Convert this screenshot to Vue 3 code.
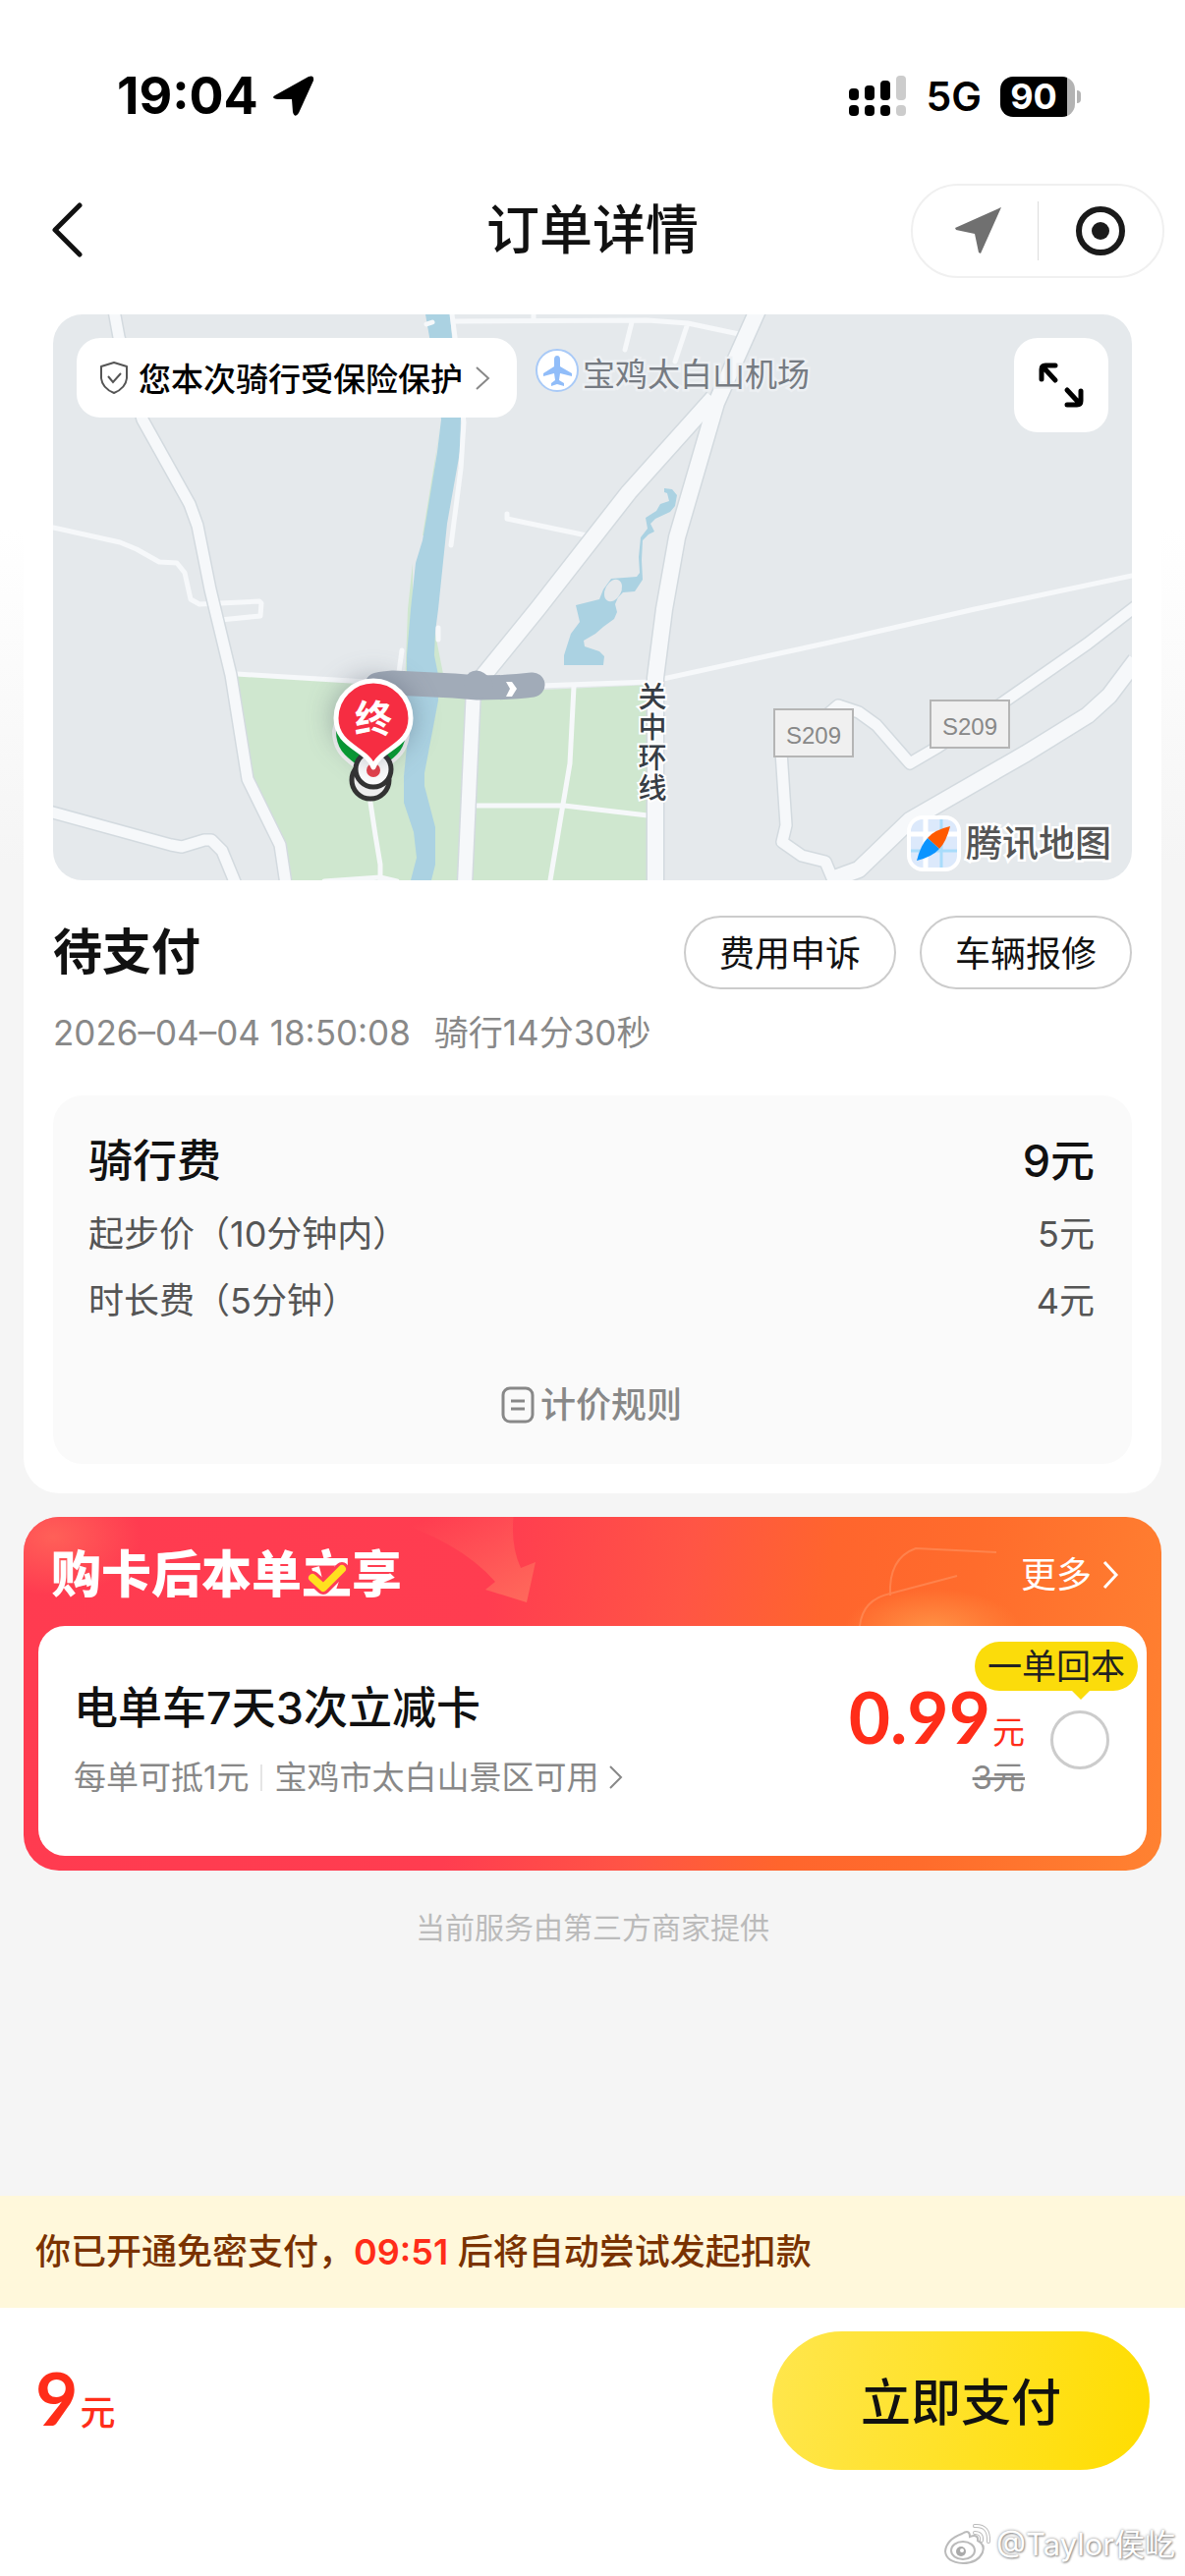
<template>
  <div class="page">
    <header class="top">
      <div class="status-bar">
        <div class="status-left">
          <span class="time">19:04</span>
          <svg width="44" height="44" viewBox="0 0 44 44">
            <path d="M3 21 L37 2 Q43 0 42 6 L27 39 Q23 45 21 38 L20 25 L6 25 Q-2 24 3 21Z" fill="#000" />
          </svg>
        </div>
        <div class="status-right">
          <svg width="60" height="42" viewBox="0 0 60 42">
            <g fill="#000">
              <rect x="0" y="13" width="10" height="12" rx="4" />
              <rect x="16" y="10" width="10" height="15" rx="4" />
              <rect x="32" y="5" width="10" height="20" rx="4" />
              <rect x="0" y="30" width="10" height="11" rx="4" />
              <rect x="16" y="30" width="10" height="11" rx="4" />
              <rect x="32" y="30" width="10" height="11" rx="4" />
            </g>
            <g fill="#ccc">
              <rect x="48" y="0" width="10" height="25" rx="4" />
              <rect x="48" y="30" width="10" height="11" rx="4" />
            </g>
          </svg>
          <span class="network">5G</span>
          <div class="battery"><span class="battery-num">90</span></div>
        </div>
      </div>

      <nav class="nav">
        <button class="back" aria-label="返回">
          <svg width="36" height="60" viewBox="0 0 36 60">
            <path d="M32 4 L7 29 L32 54" fill="none" stroke="#111" stroke-width="5" stroke-linecap="round" stroke-linejoin="round" />
          </svg>
        </button>
        <h1 class="nav-title">订单详情</h1>
        <div class="capsule">
          <button class="capsule-btn" aria-label="位置">
            <svg width="56" height="48" viewBox="-8 0 56 48">
              <path d="M47 0 L0 21 L1 23 L20 27 L24 46 L26 47Z" fill="#707070" />
            </svg>
          </button>
          <span class="capsule-line"></span>
          <button class="capsule-btn" aria-label="关闭">
            <svg width="52" height="52" viewBox="0 0 52 52">
              <circle cx="26" cy="26" r="22" fill="none" stroke="#1a1a1a" stroke-width="6" />
              <circle cx="26" cy="26" r="9" fill="#1a1a1a" />
            </svg>
          </button>
        </div>
      </nav>
    </header>

    <main class="content">
      <section class="order-card">
        <div class="map">
          <svg class="map-canvas" viewBox="0 0 1098 576" preserveAspectRatio="xMidYMid slice">
            <rect width="1098" height="576" fill="#e5e9ec" />
            <!-- 绿地 -->
            <path d="M181 367 L319 376 L500 382 L610 377 L613 576 L240 576 L231 540 L198 473Z" fill="#cfe7cf" />
            <path d="M366 253 L361 300 L358 380 L364 380 L366 300Z M388 320 L397 366 L392 380 L386 380Z M394 110 L390 140 L376 225 L380 225Z" fill="#cfe7cf" />
            <!-- 水域 -->
            <path d="M379 0 L383 23 L395 107 L391 140 L380 207 L376 230 L369 253 L364 300 L360 347 L360 440 L357 470 L357 497 L367 527 L370 553 L364 576 L385 576 L389 560 L389 522 L378 480 L378 467 L392 393 L392 367 L388 347 L389 323 L392 300 L401 213 L414 140 L415 105 L406 23 L404 0Z" fill="#abd2e2" />
            <path d="M622 177 L630 178 L635 184 L633 195 L628 201 L613 208 L608 213 L612 221 L606 224 L600 230 L599 250 L600 270 L592 282 L580 283 L575 288 L572 295 L574 303 L571 310 L560 318 L552 325 L540 332 L541 338 L556 343 L561 348 L560 357 L520 357 L520 347 L527 325 L536 313 L532 296 L556 290 L560 280 L568 269 L594 267 L597 263 L596 247 L598 227 L605 218 L603 207 L614 200 L618 193 L627 190 L625 182 L622 181Z" fill="#abd2e2" />
            <ellipse cx="570" cy="281" rx="8" ry="12" transform="rotate(28 570 281)" fill="#e5e9ec" />
            <!-- 小路 -->
            <g class="road-small">
              <path d="M0 217 L68 232 L85 239 L108 252 L126 253 L134 263 L140 290 L149 295 L210 292 L212 294 L211 307 L170 311" />
              <path d="M406 0 L409 23 L418 110 L415 157 L405 235" />
              <path d="M409 7 L605 6 L646 9 L698 20 M489 0 L489 6 M589 8 L582 36 M645 12 L633 48" />
              <path d="M462 203 L462 208 L543 225" />
              <path d="M355 342 L352 364 M392 319 L392 331 M380 10 L386 8" />
              <path d="M530 379 L526 457 L506 576 M428 500 L520 500 L605 510" />
              <path d="M323 497 L328 530 L333 560 L333 576 M276 577 L333 573 L350 577" />
              <path d="M187 366 L319 374 M495 378 L607 374 L790 334 L938 300 L1098 266" />
            </g>
            <!-- 主路：先描边再填充 -->
            <g v-for="layer in ['edge', 'fill']" :key="layer" :class="'road-' + layer">
              <g v-for="road in roads" :key="road.d">
                <path :d="road.d" :stroke-width="layer === 'edge' ? road.w + 3 : road.w" />
              </g>
            </g>
            <g v-for="sign in signs" :key="sign.x">
              <rect :x="sign.x" :y="sign.y" width="80" height="48" fill="#f0f0f0" stroke="#b5b5b5" stroke-width="2" />
              <text :x="sign.x + 40" :y="sign.y + 35" class="sign-text">S209</text>
            </g>
            <text v-for="(char, i) in '关中环线'" :key="char" x="610" :y="400 + i * 31" class="road-name">{{ char }}</text>

            <!-- 机场 -->
            <circle cx="513" cy="57" r="21" fill="#fff" stroke="#a9caf7" stroke-width="2" />
            <path d="M513 42 Q516 42 516 46 L516 53 L528 60 L528 63 L516 60 L515 67 L520 70 L520 73 L513 71 L507 73 L507 70 L511 67 L510 60 L499 63 L499 60 L510 53 L510 46 Q510 42 513 42Z" fill="#91bdf9" />
            <text x="539" y="73" class="place-name">宝鸡太白山机场</text>

            <!-- 骑行轨迹 -->
            <path d="M330 377 Q336 376 346 375 L408 378 L432 380 Q466 380 488 377" class="track" />
            <path d="M431 375 L435 378" class="track" />
            <path d="M461 374 L467 374 L472 381 L467 389 L461 389 L465 381Z" fill="#fff" />

            <!-- 起终点 -->
            <circle cx="323" cy="474" r="19" fill="#eee" stroke="#333" stroke-width="5" />
            <path d="M323 478 C319 458 286 458 286 424 A38 38 0 0 1 361 424 C361 458 327 458 323 478Z" fill="#00a32e" stroke="#f5f5f5" stroke-width="4" />
            <circle cx="326" cy="463" r="18" fill="#fff" stroke="#333" stroke-width="5" />
            <circle cx="326" cy="464" r="7" fill="#e8404a" />
            <path class="pin" d="M326 461 C320 442 288 440 288 411 A38 38 0 0 1 364 411 C364 440 332 442 326 461Z" fill="#f62d42" stroke="#fff" stroke-width="5" />
            <text x="326" y="425" class="pin-text">终</text>

            <!-- 地图标识 -->
            <rect x="871" y="512" width="51" height="53" rx="14" fill="#dce9fb" stroke="#fff" stroke-width="4" />
            <path d="M888 514 V563 M873 529 H920" stroke="#fff" stroke-width="5" />
            <path d="M904 514 V563 M873 546 H920" stroke="#a8dcfb" stroke-width="3" />
            <path d="M913 521 Q896 525 890 533 L902 544 Q909 537 913 521Z" fill="#ff5a00" />
            <path d="M879 556 Q895 552 902 544 L890 533 Q883 540 879 556Z" fill="#0a94ff" />
            <text x="929" y="552" class="brand">腾讯地图</text>
          </svg>

          <div class="map-tools">
            <button class="insurance">
              <svg width="32" height="36" viewBox="0 0 32 36">
                <path d="M16 2 L29 6 V18 Q28 28 16 33 Q4 28 3 18 V6Z" fill="none" stroke="#555" stroke-width="2" stroke-linejoin="round" />
                <path d="M10 16 L15 22 L23 13" fill="none" stroke="#555" stroke-width="2" />
              </svg>
              <span>您本次骑行受保险保护</span>
              <svg class="chevron" width="16" height="26" viewBox="0 0 16 26">
                <path d="M2 2 L14 13 L2 24" fill="none" stroke="#888" stroke-width="2" />
              </svg>
            </button>
            <button class="expand" aria-label="展开地图">
              <svg width="48" height="48" viewBox="0 0 48 48" fill="none" stroke="#000" stroke-width="5" stroke-linecap="round" stroke-linejoin="round">
                <path d="M18 19 L5 5 M4 18 V8 Q4 4 8 4 L18 4" />
                <path d="M30 29 L43 43 M44 30 V40 Q44 44 40 44 L30 44" />
              </svg>
            </button>
          </div>
        </div>

        <div class="state-row">
          <h2 class="state">待支付</h2>
          <div class="state-actions">
            <button class="pill-btn">费用申诉</button>
            <button class="pill-btn">车辆报修</button>
          </div>
        </div>
        <p class="ride-info"><span>2026–04–04 18:50:08</span><span>骑行14分30秒</span></p>

        <div class="fee-box">
          <div class="fee-total"><span>骑行费</span><span>9元</span></div>
          <div v-for="fee in fees" :key="fee.name" class="fee-row">
            <span>{{ fee.name }}</span><span>{{ fee.price }}</span>
          </div>
          <button class="rule-btn">
            <svg width="34" height="38" viewBox="0 0 34 38" fill="none" stroke="#888" stroke-width="3">
              <rect x="2" y="2" width="30" height="34" rx="7" />
              <path d="M10 15 H24 M10 23 H24" />
            </svg>
            计价规则
          </button>
        </div>
      </section>

      <section class="promo">
        <svg class="promo-bg" viewBox="0 0 1158 111" preserveAspectRatio="xMidYMin slice">
          <defs>
            <linearGradient id="arrowFade" x1="0" y1="0" x2="1" y2="1">
              <stop offset="0.2" stop-color="#ff6a5c" stop-opacity="0" />
              <stop offset="1" stop-color="#ff6a5c" />
            </linearGradient>
            <radialGradient id="glow">
              <stop offset="0" stop-color="#ff9245" />
              <stop offset="1" stop-color="#ff9245" stop-opacity="0" />
            </radialGradient>
            <radialGradient id="cornerGlow">
              <stop offset="0" stop-color="#ff6058" />
              <stop offset="1" stop-color="#ff6058" stop-opacity="0" />
            </radialGradient>
          </defs>
          <ellipse cx="30" cy="20" rx="90" ry="60" fill="url(#cornerGlow)" />
          <path d="M350 -4 Q440 20 480 66 L470 74 L512 87 L521 46 L506 52 Q495 28 499 -4Z" fill="url(#arrowFade)" />
          <ellipse cx="925" cy="115" rx="90" ry="42" fill="url(#glow)" />
          <g fill="none" stroke="#ff9b6c" stroke-width="2" opacity="0.5">
            <path d="M882 80 Q880 42 908 32 L990 36" />
            <path d="M851 111 Q854 84 882 78 L950 60" />
          </g>
        </svg>
        <div class="promo-head">
          <h3 class="promo-title">购卡后本单<span class="li">立<svg class="check" width="44" height="34" viewBox="0 0 44 34" fill="none" stroke-linecap="round" stroke-linejoin="round">
            <path d="M7 16 L18 26 L37 7" stroke="#ff3d57" stroke-width="14" />
            <path d="M7 16 L18 26 L37 7" stroke="#ffe01f" stroke-width="8" />
          </svg></span>享</h3>
          <a class="more" href="#">更多
            <svg width="18" height="32" viewBox="0 0 18 32"><path d="M3 3 L15 16 L3 29" fill="none" stroke="#fff" stroke-width="3" /></svg>
          </a>
        </div>
        <div class="promo-body">
          <div class="promo-info">
            <h4 class="promo-name">电单车7天3次立减卡</h4>
            <p class="promo-desc">
              <span>每单可抵1元</span>
              <i class="desc-line"></i>
              <a class="area" href="#">宝鸡市太白山景区可用
                <svg width="15" height="26" viewBox="0 0 15 26"><path d="M2 2 L13 13 L2 24" fill="none" stroke="#888" stroke-width="2" /></svg>
              </a>
            </p>
          </div>
          <div class="promo-price">
            <label class="price" for="card"><b>0.99</b>元</label>
            <del class="old-price">3元</del>
          </div>
          <div class="pick">
            <input id="card" v-model="checked" class="pick-input" type="checkbox" />
            <span class="tip">一单回本</span>
          </div>
        </div>
      </section>

      <p class="provider">当前服务由第三方商家提供</p>
    </main>

    <footer class="footer">
      <p class="notice">你已开通免密支付，<b>09:51</b> 后将自动尝试发起扣款</p>
      <div class="pay-bar">
        <div class="amount"><b>9</b>元</div>
        <button class="pay-btn">立即支付</button>
      </div>
      <div class="watermark">
        <svg width="50" height="44" viewBox="0 0 50 44">
          <g fill="#fff" stroke="#bbb" stroke-width="2">
            <path d="M19 11 Q27 6 27 14 Q36 11 35 18 Q43 22 40 30 Q35 41 20 41 Q3 40 2 29 Q3 17 19 11Z" />
            <ellipse cx="20" cy="28" rx="12" ry="9" />
          </g>
          <circle cx="18" cy="29" r="5" fill="#aaa" />
          <circle cx="19" cy="28" r="2" fill="#fff" />
          <path d="M32 3 Q47 2 46 19 M32 10 Q40 10 39 18" fill="none" stroke="#bbb" stroke-width="4" stroke-linecap="round" />
          <path d="M32 3 Q47 2 46 19 M32 10 Q40 10 39 18" fill="none" stroke="#fff" stroke-width="2" stroke-linecap="round" />
        </svg>
        <span>@Taylor侯屹</span>
      </div>
    </footer>
  </div>
</template>

<script setup>
import { ref } from 'vue'

const checked = ref(false)

const fees = [
  { name: '起步价（10分钟内）', price: '5元' },
  { name: '时长费（5分钟）', price: '4元' }
]

const roads = [
  { w: 11, d: 'M62 -4 L67 23 L91 107 L139 193 L147 215 L160 280 L181 367 L198 473 L231 540 L237 580' },
  { w: 11, d: 'M-4 506 L120 540 L131 542 L154 535 L161 535 L172 546 L186 580' },
  { w: 16, d: 'M717 -4 L675 90 L635 227 L622 300 L613 370 L613 580' },
  { w: 16, d: 'M672 85 L586 181 L493 300 L432 375' },
  { w: 14, d: 'M428 380 L419 580' },
  { w: 11, d: 'M1102 297 L1053 335 L964 397 L901 440 L872 457 L838 418 L820 405 L799 398 L785 410 L740 430 L746 520 L742 537 L762 551 L786 557 L794 576' },
  { w: 16, d: 'M1102 352 L1075 388 L1053 408 L990 447 L872 515 L820 565 L790 576' }
]

const signs = [
  { x: 734, y: 402 },
  { x: 893, y: 393 }
]
</script>

<style>
body {
  margin: 0;
}
</style>

<style scoped>
.page {
  min-height: 100vh;
  display: flex;
  flex-direction: column;
  background: linear-gradient(#fff 540px, #f5f5f5 880px);
  color: #111;
  font-family: Inter, 'Noto Sans CJK SC', sans-serif;
  font-size: 36px;
  line-height: 44px;
}

h1, h2, h3, h4, p {
  margin: 0;
}

button {
  border: none;
  padding: 0;
  background: none;
  font-family: inherit;
  font-size: inherit;
  color: inherit;
  cursor: pointer;
}

a {
  color: inherit;
  text-decoration: none;
}

svg {
  display: block;
  flex: none;
}

/* 状态栏 */
.status-bar {
  display: flex;
  justify-content: space-between;
  align-items: center;
  height: 84px;
  padding: 56px 112px 0 119px;
}

.status-left,
.status-right {
  display: flex;
  align-items: center;
  color: #000;
}

.status-left {
  gap: 14px;
}

.status-right {
  gap: 19px;
}

.time {
  font-size: 52px;
  font-weight: 700;
}

.network {
  font-size: 41px;
  font-weight: 600;
}

.battery {
  position: relative;
  width: 76px;
  height: 41px;
  border-radius: 13px;
  background: linear-gradient(90deg, #000 68px, #b3b3b3 68px);
  color: #fff;
}

.battery::after {
  content: '';
  position: absolute;
  right: -6px;
  top: 14px;
  width: 4px;
  height: 13px;
  border-radius: 0 6px 6px 0;
  background: #b3b3b3;
}

.battery-num {
  display: block;
  width: 68px;
  text-align: center;
  font-size: 36px;
  line-height: 41px;
  font-weight: 700;
}

.nav {
  display: grid;
  grid-template-columns: 1fr auto 1fr;
  align-items: center;
  margin-top: 47px;
  padding: 0 21px 0 49px;
}

.back {
  justify-self: start;
}

.nav-title {
  padding-right: 28px;
  font-size: 54px;
  line-height: 60px;
  font-weight: 500;
}

.capsule {
  justify-self: end;
  display: flex;
  align-items: center;
  box-sizing: border-box;
  width: 258px;
  height: 96px;
  border: 2px solid #f0f0f0;
  border-radius: 48px;
}

.capsule-btn {
  flex: 1;
  display: flex;
  justify-content: center;
}

.capsule-line {
  width: 1px;
  height: 60px;
  background: #ddd;
}

.content {
  flex: 1;
}

.order-card {
  margin: 37px 24px 0;
  padding: 0 30px 30px;
  border-radius: 0 0 36px 36px;
  background: #fff;
}

/* 地图 */
.map {
  position: relative;
  height: 576px;
  border-radius: 30px;
  overflow: hidden;
}

.map-canvas {
  width: 100%;
  height: 100%;
}

.map-canvas path {
  stroke-linejoin: round;
}

.road-small {
  fill: none;
  stroke: #f6f8fa;
  stroke-width: 5;
  stroke-linecap: round;
}

.road-edge {
  fill: none;
  stroke: #d3dadf;
}

.road-fill {
  fill: none;
  stroke: #f6f8fa;
}

.sign-text {
  font-family: 'Liberation Sans', sans-serif;
  font-size: 24px;
  fill: #888;
  text-anchor: middle;
}

.road-name {
  font-size: 29px;
  font-weight: 500;
  fill: #373d45;
  text-anchor: middle;
  stroke: #fff;
  stroke-width: 4px;
  paint-order: stroke;
}

.place-name {
  font-size: 33px;
  fill: #767b82;
  stroke: #edf0f3;
  stroke-width: 5px;
  paint-order: stroke;
}

.track {
  fill: none;
  stroke: #a1abb8;
  stroke-width: 25;
  stroke-linecap: round;
}

.pin {
  filter: drop-shadow(0 0 14px rgba(60, 70, 90, 0.4));
}

.pin-text {
  font-size: 38px;
  font-weight: 700;
  fill: #fff;
  text-anchor: middle;
}

.brand {
  font-size: 37px;
  font-weight: 500;
  fill: #555;
  stroke: #fff;
  stroke-width: 5px;
  paint-order: stroke;
}

.map-tools {
  position: absolute;
  top: 24px;
  left: 24px;
  right: 24px;
  display: flex;
  justify-content: space-between;
  align-items: flex-start;
}

.insurance {
  display: flex;
  align-items: center;
  height: 81px;
  padding: 0 27px 0 22px;
  border-radius: 24px;
  background: #fff;
  color: #000;
  font-size: 33px;
  font-weight: 500;
}

.insurance span {
  margin: 0 12px 2px 9px;
}

.expand {
  display: flex;
  align-items: center;
  justify-content: center;
  width: 96px;
  height: 96px;
  border-radius: 24px;
  background: #fff;
}

/* 订单状态 */
.state-row {
  display: flex;
  justify-content: space-between;
  align-items: center;
  margin-top: 36px;
}

.state {
  padding-bottom: 2px;
  font-size: 50px;
  line-height: 60px;
  font-weight: 700;
}

.state-actions {
  display: flex;
  gap: 24px;
}

.pill-btn {
  width: 216px;
  height: 75px;
  padding-bottom: 4px;
  border: 2px solid #ccc;
  border-radius: 38px;
}

.ride-info {
  display: flex;
  gap: 24px;
  margin-top: 22px;
  font-size: 35px;
  color: #888;
}

.fee-box {
  display: flex;
  flex-direction: column;
  margin-top: 42px;
  padding: 37px 38px 36px 36px;
  border-radius: 30px;
  background: #fafafa;
}

.fee-total,
.fee-row {
  display: flex;
  justify-content: space-between;
}

.fee-total {
  margin-bottom: 10px;
  font-size: 45px;
  line-height: 60px;
  font-weight: 500;
}

.fee-row {
  line-height: 68px;
  color: #555;
}

.rule-btn {
  align-self: center;
  display: flex;
  align-items: center;
  gap: 6px;
  margin-top: 48px;
  line-height: 48px;
  font-weight: 500;
  color: #888;
}

/* 购卡推荐 */
.promo {
  position: relative;
  margin: 24px 24px 0;
  padding: 0 15px 15px;
  border-radius: 36px;
  background: linear-gradient(100deg, #ff3b50 0%, #ff3d50 40%, #ff5545 56%, #ff652d 68%, #ff6c2c 80%, #ff8231 100%);
  overflow: hidden;
}

.promo-bg {
  position: absolute;
  top: 0;
  left: 0;
  width: 100%;
  height: 111px;
}

.promo-head {
  position: relative;
  display: flex;
  justify-content: space-between;
  align-items: center;
  box-sizing: border-box;
  height: 111px;
  padding: 6px 28px 0 13px;
  color: #fff;
}

.promo-title {
  font-size: 51px;
  line-height: 60px;
  font-weight: 900;
}

.li {
  position: relative;
}

.check {
  position: absolute;
  left: 4px;
  top: 18px;
}

.more {
  display: flex;
  align-items: center;
  gap: 10px;
}

.promo-body {
  position: relative;
  display: flex;
  align-items: flex-start;
  box-sizing: border-box;
  height: 234px;
  padding: 54px 38px 0 36px;
  border-radius: 27px;
  background: #fff;
}

.promo-info {
  flex: 1;
}

.promo-name {
  font-size: 45px;
  line-height: 60px;
  font-weight: 500;
}

.promo-desc {
  display: flex;
  align-items: center;
  margin-top: 18px;
  font-size: 33px;
  color: #888;
}

.desc-line {
  width: 2px;
  height: 27px;
  margin: 0 12px;
  background: #e5e5e5;
}

.area {
  display: flex;
  align-items: center;
  gap: 10px;
}

.promo-price {
  display: flex;
  flex-direction: column;
  align-items: flex-end;
  color: #ff2d19;
  font-size: 33px;
}

.price b {
  margin-right: 2px;
  font-family: Lato, sans-serif;
  font-size: 73px;
  line-height: 76px;
}

.old-price {
  margin-top: 2px;
  color: #888;
}

.pick {
  position: relative;
  margin: 32px 0 0 26px;
}

.pick-input {
  display: block;
  appearance: none;
  width: 60px;
  height: 60px;
  margin: 0;
  border: 3px solid #ccc;
  border-radius: 50%;
}

.pick-input:checked {
  background: #ffdd00;
}

.tip {
  position: absolute;
  right: -29px;
  bottom: 80px;
  width: 166px;
  border-radius: 25px;
  background: #fbdc0b;
  color: #222;
  font-size: 35px;
  line-height: 50px;
  text-align: center;
  white-space: nowrap;
}

.tip::after {
  content: '';
  position: absolute;
  top: 49px;
  right: 48px;
  border: 10px solid transparent;
  border-top-color: #fbdc0b;
  border-bottom: none;
}

.provider {
  margin: 36px 0;
  text-align: center;
  font-size: 30px;
  color: #bbb;
}

/* 底部支付 */
.footer {
  position: relative;
  background: #fff;
}

.notice {
  padding: 35px 36px;
  background: #fff8db;
  color: #7a3200;
  font-weight: 500;
}

.notice b {
  color: #ff2d19;
  font-weight: 600;
}

.pay-bar {
  display: flex;
  justify-content: space-between;
  align-items: center;
  padding: 24px 36px 108px;
}

.amount {
  padding-top: 8px;
  color: #ff2d19;
  font-weight: 500;
}

.amount b {
  margin-right: 2px;
  font-family: Lato, sans-serif;
  font-size: 75px;
}

.pay-btn {
  width: 384px;
  height: 141px;
  padding-bottom: 4px;
  border-radius: 71px;
  background: linear-gradient(100deg, #ffe64d, #ffdd00);
  font-size: 51px;
  font-weight: 500;
}

.watermark {
  position: absolute;
  right: 10px;
  bottom: 10px;
  display: flex;
  align-items: center;
  gap: 4px;
  font-size: 31px;
  color: #fff;
  text-shadow: 0 0 3px #888, 1px 1px 2px #999;
}
</style>
